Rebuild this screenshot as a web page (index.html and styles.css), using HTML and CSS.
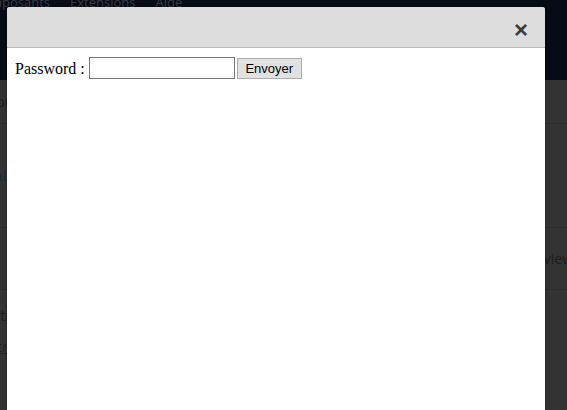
FILE: index.html
```
<!DOCTYPE html>
<html lang="fr">
<head>
    <meta charset="UTF-8">
    <meta name="viewport" content="width=device-width, initial-scale=1.0">
    <title>Password</title>
    <link rel="stylesheet" href="styles.css">
</head>
<body>
    <div class="page">
        <div class="navbar">
            <span>Composants</span>
            <span>Extensions</span>
            <span>Aide</span>
        </div>
        <div class="content">
            <div class="row row-first"><span class="cell">Nom</span></div>
            <div class="row row-tall"><span class="cell link">Calendrier</span></div>
            <div class="row row-mid"><span class="cell right">Aperçu view</span></div>
            <div class="row row-last">
                <span class="cell">Filtre</span>
                <span class="cell under">Titre</span>
            </div>
        </div>
    </div>

    <div class="modal">
        <div class="modal-header">
            <button class="close-btn" type="button">&times;</button>
        </div>
        <div class="modal-body">
            <form class="pwd-form">
                <label for="password">Password :</label>
                <input type="password" id="password" name="password">
                <button type="submit" class="send-btn">Envoyer</button>
            </form>
        </div>
    </div>
</body>
</html>
```

FILE: styles.css
```
body {
    margin: 0;
    background: #333;
    font-family: 'Open Sans', 'Liberation Sans', sans-serif;
    overflow: hidden;
    height: 410px;
}
.page {
    color: #1c1c1c;
}
.navbar {
    background: #070b16;
    height: 80px;
    font-size: 13px;
    color: #3a3d44;
    display: flex;
    gap: 20px;
    margin-left: -26px;
}
.navbar span {
    margin-top: -8px;
    line-height: 20px;
}
.content {
    background: #333;
}
.row {
    border-bottom: 1px solid #2c2c2c;
    display: flex;
    flex-direction: column;
    font-size: 14px;
}
.row-first {
    height: 43px;
    justify-content: center;
}
.row-tall {
    height: 103px;
    justify-content: center;
}
.row-mid {
    height: 61px;
    justify-content: center;
    align-items: flex-end;
}
.row-last {
    height: 120px;
    padding-top: 16px;
    gap: 12px;
}
.cell {
    margin-left: -14px;
}
.right {
    margin-right: -6px;
}
.link {
    color: #1d2a3c;
}
.under {
    text-decoration: underline;
    color: #2a2416;
}
.modal {
    position: absolute;
    top: 7px;
    left: 7px;
    width: 538px;
    height: 420px;
    background: #fff;
    border-radius: 3px 3px 0 0;
    box-shadow: 0 0 3px rgba(0,0,0,0.4);
}
.modal-header {
    height: 40px;
    background: #dddddd;
    border-bottom: 1px solid #b9b9b9;
    border-radius: 3px 3px 0 0;
    display: flex;
    justify-content: flex-end;
    align-items: center;
}
.close-btn {
    border: none;
    background: none;
    font-family: 'Liberation Sans', sans-serif;
    font-size: 24px;
    font-weight: bold;
    color: #3c3c3c;
    padding: 0;
    margin-right: 17px;
    margin-top: 5px;
    line-height: 20px;
    cursor: pointer;
}
.modal-body {
    padding: 9px 8px 8px;
    font-family: 'Liberation Serif', serif;
    font-size: 16px;
    color: #000;
}
.pwd-form {
    display: flex;
    align-items: center;
}
.pwd-form label {
    margin-right: 4px;
    margin-top: 2px;
}
.pwd-form input {
    width: 142px;
    height: 18px;
    border: 1px solid #767676;
    padding: 1px;
    margin: 0 2px 0 0;
    box-sizing: content-box;
}
.send-btn {
    font-family: 'Liberation Sans', sans-serif;
    font-size: 13px;
    background: #e1e1e1;
    border: 1px solid #adadad;
    height: 21px;
    width: 65px;
    padding: 0;
    margin-top: 1px;
    color: #000;
}
```
